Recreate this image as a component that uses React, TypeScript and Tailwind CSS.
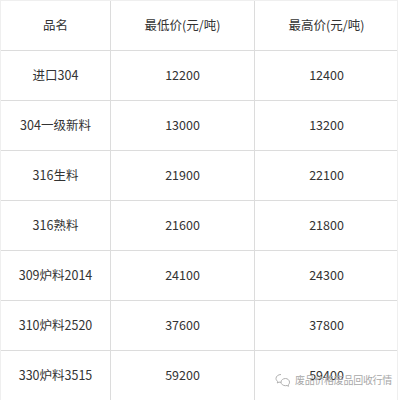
import React from "react";

const rows: [string, string, string][] = [
  ["进口304", "12200", "12400"],
  ["304一级新料", "13000", "13200"],
  ["316生料", "21900", "22100"],
  ["316熟料", "21600", "21800"],
  ["309炉料2014", "24100", "24300"],
  ["310炉料2520", "37600", "37800"],
  ["330炉料3515", "59200", "59400"],
];

function Row({ cells }: { cells: [string, string, string] }) {
  return (
    <div className="grid grid-cols-[110px_144px_143px] h-[50px] border-b border-[#dcdcdc]">
      <div className="flex items-center justify-center border-r border-[#dcdcdc]">{cells[0]}</div>
      <div className="flex items-center justify-center border-r border-[#dcdcdc]">{cells[1]}</div>
      <div className="flex items-center justify-center">{cells[2]}</div>
    </div>
  );
}

export default function App() {
  return (
    <div
      className="relative w-[400px] h-[400px] bg-white text-[#333333] text-[12.5px]"
      style={{ fontFamily: '"Noto Sans CJK SC", "Noto Sans", sans-serif' }}
    >
      <div className="w-[398px] border-t border-l border-r border-[#efefef]">
        <Row cells={["品名", "最低价(元/吨)", "最高价(元/吨)"]} />
        {rows.map((r) => (
          <Row key={r[0]} cells={r} />
        ))}
      </div>
      <div className="absolute left-[275px] top-[372px] flex items-center gap-[4px] text-[10px] text-[#a8a8a8]">
        <svg width="16" height="14" viewBox="0 0 16 14" fill="none" stroke="#b0b0b0" strokeWidth="1">
          <path d="M6 1.5C3.2 1.5 1 3.3 1 5.5c0 1.2.7 2.3 1.7 3L2.3 10l1.7-.9c.6.2 1.3.3 2 .3" />
          <path d="M10.5 5.5c-2.5 0-4.5 1.6-4.5 3.6s2 3.6 4.5 3.6c.5 0 1-.1 1.5-.2l1.5.8-.4-1.3c1-.7 1.4-1.7 1.4-2.9 0-2-2-3.6-4-3.6z" />
        </svg>
        <span className="tracking-[-0.3px]">废品价格废品回收行情</span>
      </div>
    </div>
  );
}
